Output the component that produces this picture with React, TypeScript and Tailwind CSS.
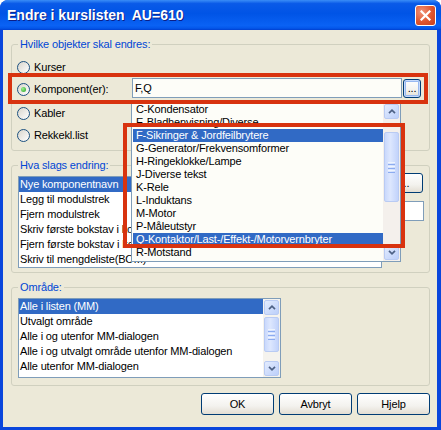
import React from 'react'

const dropItems = [
  'C-Kondensator',
  'E-Bladhenvisning/Diverse',
  'F-Sikringer & Jordfeilbrytere',
  'G-Generator/Frekvensomformer',
  'H-Ringeklokke/Lampe',
  'J-Diverse tekst',
  'K-Rele',
  'L-Induktans',
  'M-Motor',
  'P-Måleutstyr',
  'Q-Kontaktor/Last-/Effekt-/Motorvernbryter',
  'R-Motstand',
  'S-Brytere',
]
const dropSelected = ['F-Sikringer & Jordfeilbrytere', 'Q-Kontaktor/Last-/Effekt-/Motorvernbryter']

const changeItems = [
  'Nye komponentnavn',
  'Legg til modulstrek',
  'Fjern modulstrek',
  'Skriv første bokstav i komponentnavn',
  'Fjern første bokstav i komponentnavn',
  'Skriv til mengdeliste(BOM)',
]

const areaItems = [
  'Alle i listen (MM)',
  'Utvalgt område',
  'Alle i og utenfor MM-dialogen',
  'Alle i og utvalgt område utenfor MM-dialogen',
  'Alle utenfor MM-dialogen',
]

function Radio({ label, checked }: { label: string; checked?: boolean }) {
  return (
    <div className="flex h-[13px] items-center gap-[4px]">
      <span className="flex h-[13px] w-[13px] shrink-0 items-center justify-center rounded-full border border-[#1c5180] bg-[linear-gradient(135deg,#d8d5cc,#ffffff)]">
        {checked && (
          <span className="h-[5px] w-[5px] rounded-full bg-[radial-gradient(circle_at_35%_35%,#9cf08f,#21a121)]" />
        )}
      </span>
      <span className="whitespace-nowrap">{label}</span>
    </div>
  )
}

function ScrollArrow({ dir }: { dir: 'up' | 'down' }) {
  return (
    <div className="flex h-[15px] w-[15px] items-center justify-center rounded-[2px] border border-[#b9cbf3] bg-[linear-gradient(135deg,#e3ecfe,#bccffa)]">
      <svg width="8" height="5" viewBox="0 0 8 5">
        <path
          d={dir === 'up' ? 'M1 4.2 L4 1.2 L7 4.2' : 'M1 0.8 L4 3.8 L7 0.8'}
          stroke="#4d6185"
          strokeWidth="1.7"
          fill="none"
        />
      </svg>
    </div>
  )
}

function Thumb({ height, top }: { height: string; top: string }) {
  return (
    <div
      className={`flex w-[15px] flex-col items-center justify-center gap-[1px] rounded-[2px] border border-[#b9cbf3] bg-[linear-gradient(90deg,#c9d8fc,#dde7fe_40%,#c2d3fb)] ${height} ${top}`}
    >
      <span className="h-[1px] w-[7px] bg-[#eef4fe]" />
      <span className="h-[1px] w-[7px] bg-[#8cacf0]" />
      <span className="h-[1px] w-[7px] bg-[#eef4fe]" />
      <span className="h-[1px] w-[7px] bg-[#8cacf0]" />
      <span className="h-[1px] w-[7px] bg-[#eef4fe]" />
      <span className="h-[1px] w-[7px] bg-[#8cacf0]" />
    </div>
  )
}

function XpButton({ label, className = '' }: { label: string; className?: string }) {
  return (
    <div
      className={`flex items-center justify-center rounded-[3px] border border-[#003c74] bg-[linear-gradient(180deg,#ffffff_0%,#f3f2ee_60%,#e3ded3_100%)] ${className}`}
    >
      {label}
    </div>
  )
}

function GroupBox({ title, children, className = '' }: { title: string; children: React.ReactNode; className?: string }) {
  return (
    <fieldset className={`rounded-[3px] border border-[#d0d0bf] ${className}`}>
      <legend className="ml-[6px] px-[2px] leading-[13px] text-[#0046d5]">{title}</legend>
      {children}
    </fieldset>
  )
}

function TitleBar() {
  return (
    <div className="flex h-[30px] items-center justify-between bg-[linear-gradient(180deg,#3a8df7_0%,#0a5ae8_12%,#0054e6_45%,#0a62f4_85%,#0457ea_94%,#003fd0_100%)] pl-[7px] pr-[5px]">
      <span className="whitespace-pre pt-[1px] text-[14px] font-bold tracking-normal text-white [text-shadow:1px_1px_#0c1f86]">
        Endre i kurslisten  AU=610
      </span>
      <div className="flex h-[21px] w-[21px] items-center justify-center rounded-[3px] border border-white bg-[radial-gradient(circle_at_30%_30%,#f0937a,#e0552e_55%,#c8401c)]">
        <svg width="11" height="11" viewBox="0 0 11 11">
          <path d="M1.5 1.5 L9.5 9.5 M9.5 1.5 L1.5 9.5" stroke="white" strokeWidth="2.2" strokeLinecap="square" />
        </svg>
      </div>
    </div>
  )
}

export default function App() {
  return (
    <div className="h-[430px] w-[441px] bg-white">
      <div className="relative flex h-[430px] w-[441px] flex-col overflow-hidden rounded-t-[8px] bg-[#0a46dc] font-['Liberation_Sans',Arial,sans-serif] text-[11px] leading-[13px] tracking-[-0.15px] text-black">
        <TitleBar />

        <div className="mb-[3px] ml-[3px] mr-[4px] flex flex-1 flex-col bg-[#ece9d8] pl-[8px] pr-[7px]">
          {/* Hvilke objekter */}
          <GroupBox title="Hvilke objekter skal endres:" className="mt-[8px]">
            <div className="flex flex-col pb-[8px] pl-[5px] pt-[10px]">
              <Radio label="Kurser" />
              <div className="mt-[4px] flex h-[20px] items-start">
                <div className="mt-[5px] w-[115px]">
                  <Radio label="Komponent(er):" checked />
                </div>
                <div className="flex h-[20px] w-[270px] items-center border border-[#7f9db9] bg-[#fdfdf8] pl-[2px]">F,Q</div>
                <XpButton
                  label="..."
                  className="ml-[1px] mt-[1px] h-[19px] w-[18px] border-[#1a4a8a] shadow-[inset_0_0_0_1px_#c6dafc,inset_0_0_0_2px_#98b8f0]"
                />
              </div>
              <div className="mt-[9px]">
                <Radio label="Kabler" />
              </div>
              <div className="mt-[9px]">
                <Radio label="Rekkekl.list" />
              </div>
            </div>
          </GroupBox>

          {/* Hva slags endring */}
          <GroupBox title="Hva slags endring:" className="mt-[8px]">
            <div className="flex items-start pb-[4px] pl-[6px]">
              <div className="mt-[4px] h-[92px] w-[364px] overflow-hidden border border-[#7f9db9] bg-white leading-[15px]">
                {changeItems.map((item, i) => (
                  <div
                    key={item}
                    className={`h-[15px] whitespace-nowrap pl-[1px] ${i === 0 ? 'bg-[#316ac5] text-white' : ''}`}
                  >
                    {item}
                  </div>
                ))}
              </div>
              <div className="ml-[5px] flex flex-col">
                <XpButton label="..." className="mt-[1px] h-[20px] w-[36px]" />
                <div className="mt-[8px] h-[20px] w-[37px] border border-[#7f9db9] bg-white" />
              </div>
            </div>
          </GroupBox>

          {/* Område */}
          <GroupBox title="Område:" className="mt-[8px]">
            <div className="pb-[7px] pl-[6px] pt-[4px]">
              <div className="flex h-[80px] w-[263px] border border-[#7f9db9] bg-white leading-[15px]">
                <div className="flex-1 overflow-hidden">
                  {areaItems.map((item, i) => (
                    <div
                      key={item}
                      className={`h-[15px] whitespace-nowrap pl-[1px] ${i === 0 ? 'bg-[#316ac5] text-white' : ''}`}
                    >
                      {item}
                    </div>
                  ))}
                </div>
                <div className="flex w-[17px] flex-col items-center bg-[#f5f3ee] py-[1px]">
                  <ScrollArrow dir="up" />
                  <Thumb height="h-[35px]" top="mt-[2px]" />
                  <div className="flex-1" />
                  <ScrollArrow dir="down" />
                </div>
              </div>
            </div>
          </GroupBox>

          <div className="mt-[7px] flex justify-end gap-[5px]">
            <XpButton label="OK" className="h-[22px] w-[73px]" />
            <XpButton label="Avbryt" className="h-[22px] w-[73px]" />
            <XpButton label="Hjelp" className="h-[22px] w-[73px]" />
          </div>
        </div>

        {/* open drop-down list */}
        <div className="absolute left-[131px] top-[102px] flex h-[160px] w-[270px] border border-[#7f9db9] bg-[#fdfdf8]">
          <div className="flex-1 overflow-hidden pl-[1px]">
            {dropItems.map((item) => (
              <div
                key={item}
                className={`h-[13px] whitespace-nowrap pl-[3px] ${dropSelected.includes(item) ? 'bg-[#316ac5] text-white' : ''}`}
              >
                {item}
              </div>
            ))}
          </div>
          <div className="flex w-[17px] flex-col items-center bg-[#f4f0ec] py-[1px]">
            <ScrollArrow dir="up" />
            <Thumb height="h-[70px]" top="mt-[13px]" />
            <div className="flex-1" />
            <ScrollArrow dir="down" />
          </div>
        </div>

        {/* red markings */}
        <div className="absolute left-[8px] top-[73px] h-[31px] w-[420px] border-[4px] border-[#d8330f]" />
        <div className="absolute left-[123px] top-[123px] h-[125px] w-[282px] border-[4px] border-[#d8330f]" />
      </div>
    </div>
  )
}
